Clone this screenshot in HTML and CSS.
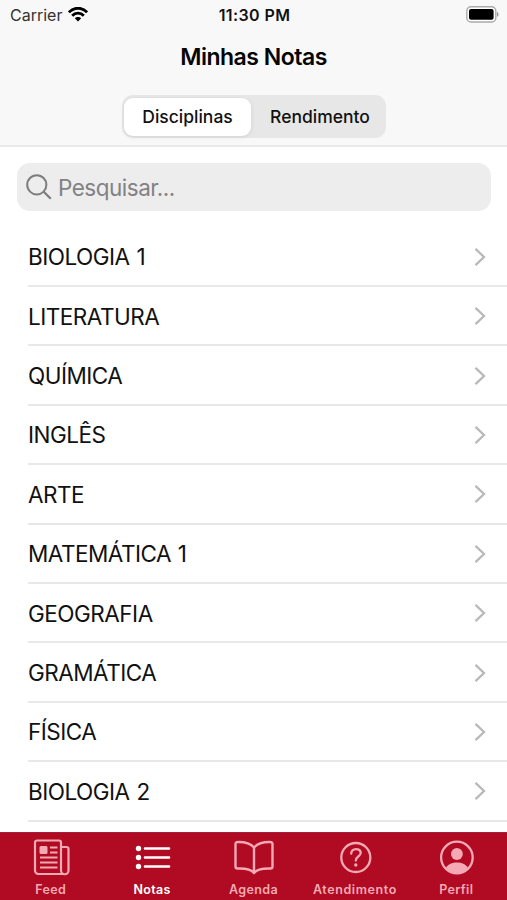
FILE: index.html
```html
<!DOCTYPE html>
<html lang="pt-BR">
<head>
<meta charset="utf-8">
<title>Minhas Notas</title>
<link rel="stylesheet" href="styles.css">
</head>
<body>
<svg width="0" height="0" class="defs"><symbol id="chevron" viewBox="0 0 12 20"><path d="M1.5 1.8 10 10 1.5 18.2" fill="none" stroke="currentColor" stroke-width="2.3"/></symbol></svg>
<div class="app">
  <header class="header">
    <div class="status">
      <div class="carrier"><span>Carrier</span>
        <svg width="20" height="15" viewBox="0 0 20 15"><g fill="none" stroke="#000" stroke-width="2.9"><path d="M.9 5.3C6-.1 14-.1 19.1 5.3"/><path d="M4.2 8.7c3.2-3.4 8.4-3.4 11.6 0"/></g><path d="M6.8 11.3c1.8-1.9 4.6-1.9 6.4 0L10 14.6z"/></svg>
      </div>
      <div class="time">11:30 PM</div>
      <svg class="battery" width="33" height="17" viewBox="0 0 33 17"><rect x=".8" y=".8" width="29" height="15.2" rx="4.2" fill="#fff" stroke="#aaa" stroke-width="1.4"/><rect x="3" y="3" width="24.6" height="10.8" rx="2"/><path d="M31 6c2 .6 2 4.2 0 4.8z" fill="#999"/></svg>
    </div>
    <h1>Minhas Notas</h1>
    <div class="segments"><button class="segment selected">Disciplinas</button><button class="segment second">Rendimento</button></div>
  </header>
  <main>
    <div class="search">
      <svg width="26" height="26" viewBox="0 0 26 26" fill="none" stroke="#7d7d7f" stroke-width="2"><circle cx="10.8" cy="10.8" r="9.6"/><path d="m17.7 17.7 7.1 7.1" stroke-width="2.3"/></svg>
      <span>Pesquisar...</span>
    </div>
    <ul class="list">
      <li><span>BIOLOGIA 1</span><svg><use href="#chevron"/></svg></li>
      <li><span>LITERATURA</span><svg><use href="#chevron"/></svg></li>
      <li><span>QUÍMICA</span><svg><use href="#chevron"/></svg></li>
      <li><span>INGLÊS</span><svg><use href="#chevron"/></svg></li>
      <li><span>ARTE</span><svg><use href="#chevron"/></svg></li>
      <li><span>MATEMÁTICA 1</span><svg><use href="#chevron"/></svg></li>
      <li><span>GEOGRAFIA</span><svg><use href="#chevron"/></svg></li>
      <li><span>GRAMÁTICA</span><svg><use href="#chevron"/></svg></li>
      <li><span>FÍSICA</span><svg><use href="#chevron"/></svg></li>
      <li><span>BIOLOGIA 2</span><svg><use href="#chevron"/></svg></li>
    </ul>
  </main>
  <nav class="tabs">
    <a class="tab"><svg width="40" height="40" viewBox="0 0 40 40" fill="none" stroke="currentColor" stroke-width="2.2"><path d="M33 36H7.5A3.5 3.5 0 0 1 4 32.5V4.5a2 2 0 0 1 2-2h22a2 2 0 0 1 2 2V32.5a3.5 3.5 0 0 0 7.5 0V11a2 2 0 0 0-2-2h-5.5"/><rect x="8.5" y="8" width="8" height="8" rx="1.5" fill="currentColor" stroke="none"/><path d="M19 9.5h7.5M19 14.5h7.5M9 19.5h17.5M9 24.5h17.5M9 29.5h17.5"/></svg><span>Feed</span></a>
    <a class="tab active"><svg width="40" height="40" viewBox="0 0 40 40"><g fill="currentColor"><circle cx="6.5" cy="10.5" r="2.7"/><circle cx="6.5" cy="19.5" r="2.7"/><circle cx="6.5" cy="28.5" r="2.7"/></g><path d="M13 10.5h24M13 19.5h24M13 28.5h24" stroke="currentColor" stroke-width="2.6" stroke-linecap="round"/></svg><span>Notas</span></a>
    <a class="tab"><svg width="40" height="40" viewBox="0 0 40 40" fill="none" stroke="currentColor" stroke-width="2.4" stroke-linejoin="round"><path d="M21 9.5C17.5 5.5 11 3.8 4.5 4a2 2 0 0 0-2 2V28.5a2 2 0 0 0 2 2C12 30.2 18 31 21 35c3-4 9-4.8 16.500-4.500a2 2 0 0 0 2-2V6a2 2 0 0 0-2-2C31 3.800 24.500 5.500 21 9.500zV35"/></svg><span>Agenda</span></a>
    <a class="tab"><svg width="40" height="40" viewBox="0 0 40 40" fill="none" stroke="currentColor" stroke-width="2.3"><circle cx="20.8" cy="19.5" r="14.5"/><path d="M16.2 15.7c0-6.2 9.8-6 9.5-.7-.3 3.6-4.9 3.5-4.9 7.5" stroke-linecap="round"/><circle cx="20.8" cy="27" r="1.7" fill="currentColor" stroke="none"/></svg><span class="wide">Atendimento</span></a>
    <a class="tab"><svg width="40" height="40" viewBox="0 0 40 40"><circle cx="20.9" cy="19.5" r="15.8" fill="none" stroke="currentColor" stroke-width="2.3"/><g fill="currentColor"><circle cx="20.9" cy="16" r="5.9"/><path d="M9.9 30C11.9 26 16.4 24.5 20.9 24.5s9 1.5 11 5.5A15 15 0 0 1 9.9 30z"/></g></svg><span>Perfil</span></a>
  </nav>
</div>
</body>
</html>
```

FILE: styles.css
```css
* { box-sizing: border-box; }
body { margin: 0; font-family: Inter, "Liberation Sans", sans-serif; background: #fff; color: #111; }
.defs { position: absolute; }
.app { width: 507px; height: 900px; display: flex; flex-direction: column; overflow: hidden; }
.header { height: 147px; flex: none; background: #f8f8f8; border-bottom: 2px solid #e9e9e9; }
.status { height: 29px; padding: 0 8px 0 10px; display: grid; grid-template-columns: 1fr auto 1fr; align-items: center; }
.carrier { display: flex; align-items: center; gap: 6px; font-size: 16px; color: #333; letter-spacing: 0; }
.time { font-size: 16px; font-weight: 600; letter-spacing: .4px; }
.battery { justify-self: end; margin-top: -1px; }
h1 { margin: 14px 0 0; font-size: 23px; line-height: 29px; font-weight: 600; text-align: center; letter-spacing: -.5px; color: #050505; }
.segments { display: flex; width: 264px; height: 43px; margin: 23px auto 0; padding: 2.5px; background: #e7e7e7; border-radius: 11px; }
.segment { flex: 1; padding: 0; border: 0; border-radius: 9px; background: none; color: #111; font: 500 17.5px Inter, sans-serif; }
.selected { flex: none; width: 127px; background: #fff; box-shadow: 0 1px 4px #00000018; }
.second { padding-left: 6px; }
main { flex: 1; min-height: 0; overflow: hidden; }
.search { display: flex; align-items: center; gap: 6px; height: 48px; margin: 16px 16px 16.6px 17px; padding-left: 9px; border-radius: 13px; background: #ededed; color: #828284; font-size: 22.5px; letter-spacing: -.5px; }
.list { margin: 0 0 0 28px; padding: 0; list-style: none; }
.list li { height: 59.4px; display: flex; align-items: center; justify-content: space-between; padding: 1px 21px 0 0; border-bottom: 2px solid #e8e8e8; font-size: 22.5px; letter-spacing: -.5px; word-spacing: 1px; }
.list svg { width: 12px; height: 20px; color: #b9b9bb; }
.tabs { height: 68px; flex: none; display: grid; grid-template-columns: repeat(5, 1fr); background: #b00b22; border-top: 1px solid #a4203a; }
.tab { display: flex; flex-direction: column; align-items: center; padding-top: 5px; color: #f4a9b4; font-size: 12.5px; line-height: 15px; font-weight: 600; letter-spacing: .35px; }
.tab svg { overflow: visible; }
.tab span { margin-top: 4px; }
.tab .wide { letter-spacing: .6px; }
.active { color: #fff; }
```
